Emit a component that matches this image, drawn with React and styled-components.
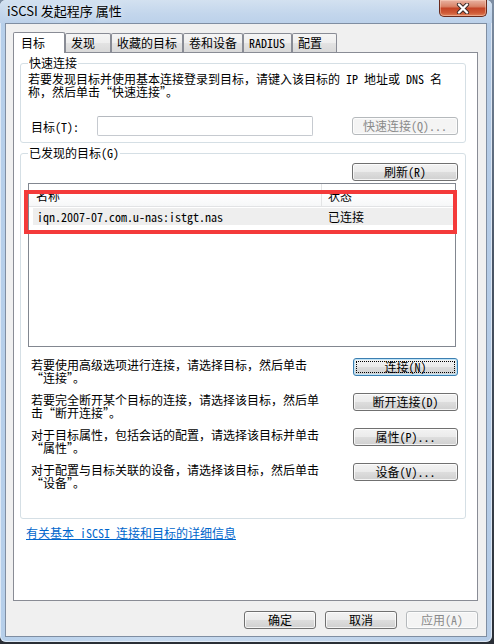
import styled, { createGlobalStyle } from "styled-components";

const UI_FONT = `"Noto Sans Mono CJK SC", "Noto Sans CJK SC", "Liberation Sans", sans-serif`;

const GlobalStyle = createGlobalStyle`
  * { box-sizing: border-box; }
  html, body { margin: 0; padding: 0; }
  body {
    width: 494px;
    height: 644px;
    overflow: hidden;
    background: linear-gradient(180deg, #7d8ea3 0%, #4a5667 40%, #2a2f36 100%);
    font-family: ${UI_FONT};
    font-size: 12px;
    color: #000;
  }
`;

const Window = styled.div`
  width: 492px;
  height: 642px;
  display: flex;
  flex-direction: column;
  border-radius: 6px;
  background: linear-gradient(90deg, #b6cfea 0%, #c7daef 30%, #c2d5eb 70%, #b4cbe6 100%);
  box-shadow: inset 0 0 0 1px rgba(255, 255, 255, 0.55);
`;

const TitleBar = styled.div`
  height: 23px;
  display: flex;
  align-items: flex-start;
  justify-content: space-between;
  padding-left: 7px;
  background: linear-gradient(180deg, #d3e1f0 0%, #c3d6ec 60%, #bcd1ea 100%);
  border-radius: 6px 6px 0 0;
`;

const TitleText = styled.div`
  font-family: "Noto Sans CJK SC", "Liberation Sans", sans-serif;
  font-size: 13px;
  line-height: 22px;
  color: #000;
  text-shadow: 0 0 6px rgba(255, 255, 255, 0.9);
`;

const CloseButton = styled.div`
  width: 48px;
  height: 17px;
  margin-right: 5px;
  display: flex;
  align-items: center;
  justify-content: center;
  border: 1px solid #6a2a1c;
  border-top: none;
  border-radius: 0 0 5px 5px;
  background: linear-gradient(180deg, #e9b2a2 0%, #d98469 40%, #c44528 52%, #cf5a36 80%, #e0835c 100%);
  box-shadow: inset 0 0 0 1px rgba(255, 220, 200, 0.45);
`;

const Client = styled.div`
  flex: 1;
  margin: 0 5px 5px 5px;
  display: flex;
  flex-direction: column;
  padding: 8px 8px 0 7px;
  background: #f0f0f0;
  border: 1px solid #7f8ea2;
`;

const TabStrip = styled.div`
  display: flex;
  align-items: flex-end;
  height: 21px;
  margin-bottom: -1px;
  position: relative;
  z-index: 1;
`;

const Tab = styled.div`
  width: ${(p) => p.$w}px;
  height: ${(p) => (p.$active ? 21 : 19)}px;
  margin-bottom: ${(p) => (p.$active ? 0 : 1)}px;
  padding-left: ${(p) => (p.$active ? 7 : 5)}px;
  line-height: ${(p) => (p.$active ? 20 : 18)}px;
  font-size: 12px;
  white-space: nowrap;
  border: 1px solid #898c95;
  border-bottom: none;
  border-radius: 2px 2px 0 0;
  background: ${(p) =>
    p.$active
      ? "#ffffff"
      : "linear-gradient(180deg, #f5f5f5 0%, #eeeeee 50%, #e3e3e3 51%, #d9d9d9 100%)"};
`;

const Panel = styled.div`
  height: 549px;
  display: flex;
  flex-direction: column;
  padding: 4px 11px 0 6px;
  background: #ffffff;
  border: 1px solid #898c95;
  position: relative;
  z-index: 0;
`;

const Group = styled.fieldset`
  margin: ${(p) => p.$top}px 0 0 0;
  padding: ${(p) => p.$padTop}px 7px ${(p) => p.$padBottom}px 7px;
  border: 1px solid #d5dfe5;
  border-radius: 3px;
  min-width: 0;
`;

const GroupTitle = styled.legend`
  padding: 0 1px;
  font-size: 12px;
  line-height: 12px;
`;

const Description = styled.div`
  font-size: 12px;
  line-height: 13px;
  margin-left: ${(p) => p.$indent || 0}px;
  white-space: nowrap;
`;

const TargetRow = styled.div`
  display: flex;
  align-items: center;
  height: 20px;
  margin-top: 18px;
`;

const FieldLabel = styled.label`
  width: 66px;
  margin-left: 3px;
  font-size: 12px;
`;

const TextInput = styled.input`
  width: 216px;
  height: 20px;
  padding: 0 3px;
  border: 1px solid #c6cad0;
  border-top-color: #b5b9bf;
  border-radius: 2px;
  font: 12px ${UI_FONT};
  background: #fff;
  outline: none;
`;

const Button = styled.button`
  width: ${(p) => p.$w}px;
  height: 18px;
  margin-left: ${(p) => (p.$push ? "auto" : "0")};
  padding: 0;
  position: relative;
  font: 12px/16px ${UI_FONT};
  color: ${(p) => (p.disabled ? "#8a8a8a" : "#000")};
  border: 1px solid ${(p) => (p.disabled ? "#b5b9bc" : p.$focused ? "#3c7fb1" : "#707070")};
  border-radius: 3px;
  background: ${(p) =>
    p.disabled
      ? "#f4f4f4"
      : "linear-gradient(180deg, #f3f3f3 0%, #ebebeb 48%, #dddddd 52%, #d0d0d0 100%)"};
  box-shadow: inset 0 0 0 1px ${(p) => (p.$focused ? "#bfe4f8" : "rgba(255,255,255,0.75)")};
  flex-shrink: 0;

  &::after {
    content: "";
    display: ${(p) => (p.$focused ? "block" : "none")};
    position: absolute;
    inset: 2px;
    border: 1px dotted #000;
  }
`;

const RefreshRow = styled.div`
  display: flex;
  justify-content: flex-end;
`;

const ListWrap = styled.div`
  position: relative;
  margin: 2px 2px 0 0;
`;

const ListBox = styled.div`
  height: 164px;
  border: 1px solid #828790;
  background: #fff;
`;

const ListHeader = styled.div`
  display: grid;
  grid-template-columns: 293px 1fr;
  height: 23px;
  background: linear-gradient(180deg, #ffffff 0%, #ffffff 45%, #f6f7f8 100%);
  border-bottom: 1px solid #e2e3e5;
`;

const HeaderCell = styled.div`
  padding: 4px 0 0 ${(p) => p.$pad}px;
  font-size: 12px;
  line-height: 16px;
  border-right: ${(p) => (p.$divider ? "1px solid #e3e4e5" : "none")};
`;

const ListRow = styled.div`
  display: grid;
  grid-template-columns: 289px 1fr;
  height: 17px;
  margin: 1px 2px 0 4px;
  background: #eeeeee;
  align-items: center;
`;

const Cell = styled.div`
  padding-left: ${(p) => p.$pad}px;
  font-size: 12px;
  line-height: 17px;
  white-space: nowrap;
`;

const Highlight = styled.div`
  position: absolute;
  left: -4px;
  top: 7px;
  width: 433px;
  height: 44px;
  border: 4px solid #f43a3a;
  pointer-events: none;
`;

const Actions = styled.div`
  display: flex;
  flex-direction: column;
  gap: 9px;
  margin-top: 11px;
`;

const ActionRow = styled.div`
  display: flex;
  align-items: flex-start;
  justify-content: space-between;
  height: 26px;
`;

const ActionText = styled.div`
  margin-left: 3px;
  font-size: 12px;
  line-height: 13px;
  white-space: nowrap;
`;

const HelpLink = styled.a`
  margin: 7px 0 0 6px;
  align-self: flex-start;
  font-size: 12px;
  line-height: 13px;
  color: #0066cc;
  text-decoration: underline;
`;

const Footer = styled.div`
  display: flex;
  justify-content: flex-end;
  gap: 9px;
  margin-top: 10px;
`;

const actions = [
  { text: ["若要使用高级选项进行连接，请选择目标，然后单击", "“连接”。"], label: "连接(N)", focused: true },
  { text: ["若要完全断开某个目标的连接，请选择该目标，然后单", "击“断开连接”。"], label: "断开连接(D)" },
  { text: ["对于目标属性，包括会话的配置，请选择该目标并单击", "“属性”。"], label: "属性(P)..." },
  { text: ["对于配置与目标关联的设备，请选择该目标，然后单击", "“设备”。"], label: "设备(V)..." },
];

const tabs = [
  { name: "目标", w: 52, active: true },
  { name: "发现", w: 46 },
  { name: "收藏的目标", w: 72 },
  { name: "卷和设备", w: 60 },
  { name: "RADIUS", w: 49 },
  { name: "配置", w: 45 },
];

const CloseIcon = () => (
  <svg width="14" height="11" viewBox="0 0 14 11">
    <path d="M3 1.5 L11 9.5 M11 1.5 L3 9.5" stroke="#3a2a28" strokeWidth="4.2" strokeLinecap="round" />
    <path d="M3 1.5 L11 9.5 M11 1.5 L3 9.5" stroke="#ffffff" strokeWidth="2.4" strokeLinecap="round" />
  </svg>
);

export default function App() {
  return (
    <>
      <GlobalStyle />
      <Window>
        <TitleBar>
          <TitleText>iSCSI 发起程序 属性</TitleText>
          <CloseButton>
            <CloseIcon />
          </CloseButton>
        </TitleBar>
        <Client>
          <TabStrip>
            {tabs.map((t) => (
              <Tab key={t.name} $w={t.w} $active={t.active}>
                {t.name}
              </Tab>
            ))}
          </TabStrip>
          <Panel>
            <Group $top={0} $padTop={3} $padBottom={6}>
              <GroupTitle>快速连接</GroupTitle>
              <Description>
                若要发现目标并使用基本连接登录到目标，请键入该目标的 IP 地址或 DNS 名
                <br />
                称，然后单击“快速连接”。
              </Description>
              <TargetRow>
                <FieldLabel>目标(T):</FieldLabel>
                <TextInput />
                <Button $w={106} $push disabled>
                  快速连接(Q)...
                </Button>
              </TargetRow>
            </Group>

            <Group $top={4} $padTop={4} $padBottom={29}>
              <GroupTitle>已发现的目标(G)</GroupTitle>
              <RefreshRow>
                <Button $w={106}>刷新(R)</Button>
              </RefreshRow>
              <ListWrap>
                <ListBox>
                  <ListHeader>
                    <HeaderCell $pad={7} $divider>
                      名称
                    </HeaderCell>
                    <HeaderCell $pad={6}>状态</HeaderCell>
                  </ListHeader>
                  <ListRow>
                    <Cell $pad={4}>iqn.2007-07.com.u-nas:istgt.nas</Cell>
                    <Cell $pad={6}>已连接</Cell>
                  </ListRow>
                </ListBox>
                <Highlight />
              </ListWrap>
              <Actions>
                {actions.map((a) => (
                  <ActionRow key={a.label}>
                    <ActionText>
                      {a.text[0]}
                      <br />
                      {a.text[1]}
                    </ActionText>
                    <Button $w={105} $focused={a.focused}>
                      {a.label}
                    </Button>
                  </ActionRow>
                ))}
              </Actions>
            </Group>

            <HelpLink href="#">有关基本 iSCSI 连接和目标的详细信息</HelpLink>
          </Panel>
          <Footer>
            <Button $w={72}>确定</Button>
            <Button $w={72}>取消</Button>
            <Button $w={72} disabled>
              应用(A)
            </Button>
          </Footer>
        </Client>
      </Window>
    </>
  );
}
